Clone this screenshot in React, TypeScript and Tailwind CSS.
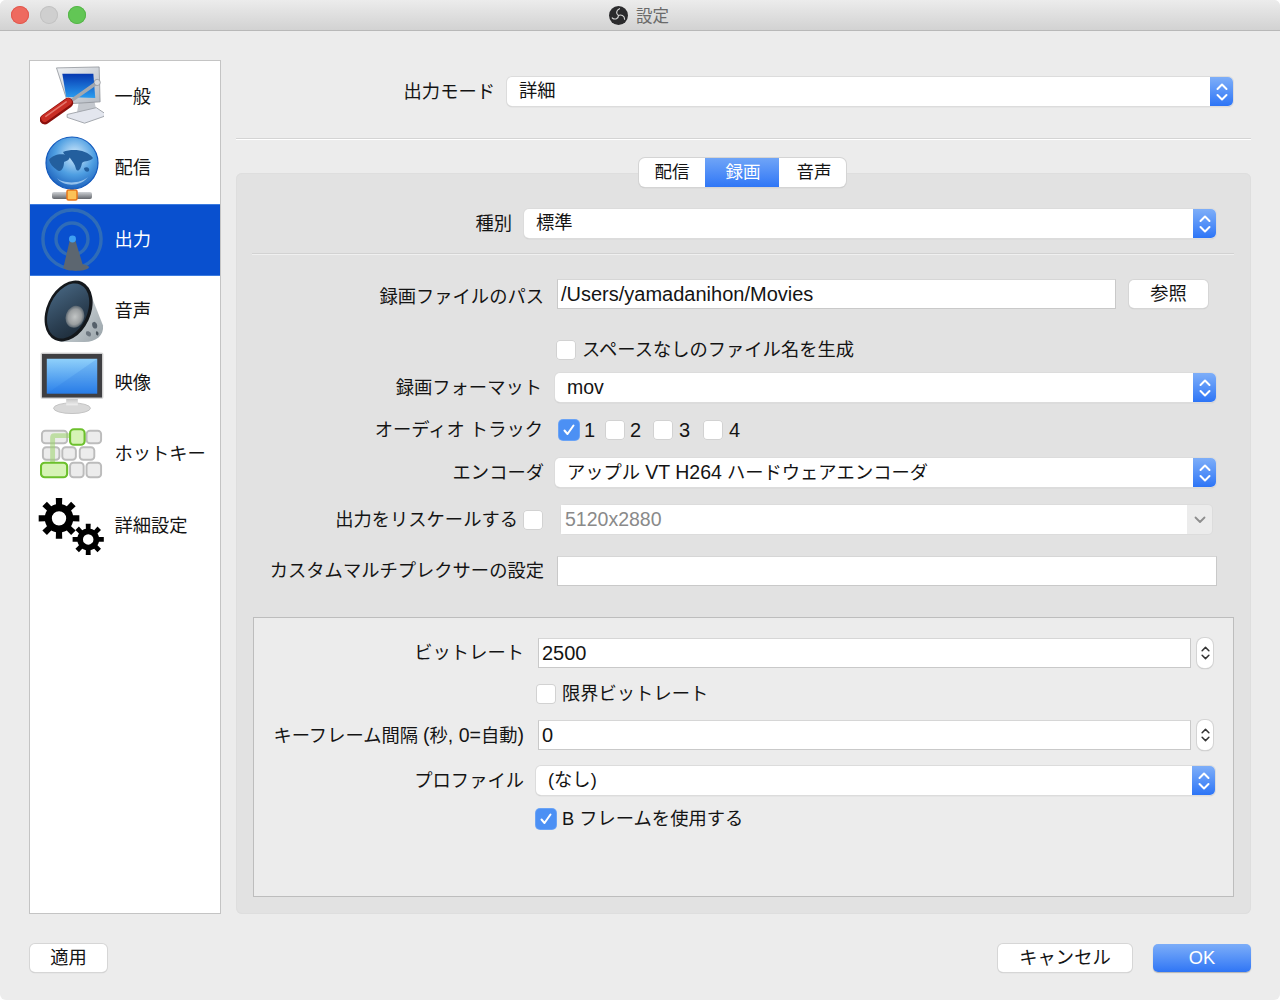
import { ReactNode } from "react";

function gearPath(cx: number, cy: number, outer: number, inner: number, hole: number, teeth: number) {
  let d = "";
  const step = (Math.PI * 2) / teeth;
  for (let i = 0; i < teeth; i++) {
    const a = i * step;
    const pts: [number, number][] = [
      [inner, a - step * 0.5],
      [inner, a - step * 0.27],
      [outer, a - step * 0.2],
      [outer, a + step * 0.2],
      [inner, a + step * 0.27],
    ];
    pts.forEach(([r, t], j) => {
      const x = (cx + r * Math.cos(t)).toFixed(2);
      const y = (cy + r * Math.sin(t)).toFixed(2);
      d += `${i === 0 && j === 0 ? "M" : "L"}${x} ${y} `;
    });
  }
  d += `Z M${cx + hole} ${cy} A${hole} ${hole} 0 1 0 ${cx - hole} ${cy} A${hole} ${hole} 0 1 0 ${cx + hole} ${cy} Z`;
  return d;
}

function GeneralIcon() {
  return (
    <svg width="66" height="62" viewBox="0 0 66 62">
      <defs>
        <linearGradient id="scr" x1="0" y1="0" x2="0" y2="1">
          <stop offset="0" stopColor="#0638b0" />
          <stop offset="1" stopColor="#2a9df0" />
        </linearGradient>
        <linearGradient id="mbz" x1="0" y1="0" x2="1" y2="1">
          <stop offset="0" stopColor="#eef0f3" />
          <stop offset="1" stopColor="#b4bac2" />
        </linearGradient>
      </defs>
      <path d="M40 36 L56 35 L58 44 L38 48 Z" fill="#c4c8ce" />
      <path d="M28 49 L58 42 L67 48 L66 51 L46 58 L28 52 Z" fill="#e3e6ee" stroke="#a2a6ac" strokeWidth="1" />
      <path d="M17 1 L61 0 L62 36 L29 38 Z" fill="url(#mbz)" stroke="#8d9198" strokeWidth="0.8" />
      <path d="M23 7 L55 7 L57 32 L27 31 Z" fill="url(#scr)" />
      <path d="M32 35 L59 16" stroke="#a4a8ae" strokeWidth="3.6" strokeLinecap="round" />
      <circle cx="59" cy="16" r="3.2" fill="#d5d8dc" stroke="#7b7f85" strokeWidth="0.6" />
      <path d="M5 54 L29 37" stroke="#8c0f0c" strokeWidth="10.5" strokeLinecap="round" />
      <path d="M5 53 L29 36" stroke="#c92d24" strokeWidth="7.5" strokeLinecap="round" />
      <path d="M6 51 L27 36" stroke="#ee8f86" strokeWidth="1.6" strokeLinecap="round" opacity="0.75" />
    </svg>
  );
}

function GlobeIcon() {
  return (
    <svg width="58" height="66" viewBox="0 0 58 66">
      <defs>
        <radialGradient id="gl" cx="0.55" cy="0.35" r="0.75">
          <stop offset="0" stopColor="#d6ecfc" />
          <stop offset="0.5" stopColor="#4f9fe2" />
          <stop offset="1" stopColor="#0e4fb0" />
        </radialGradient>
        <linearGradient id="bar" x1="0" y1="0" x2="0" y2="1">
          <stop offset="0" stopColor="#cfd2d6" />
          <stop offset="1" stopColor="#63666b" />
        </linearGradient>
      </defs>
      <rect x="27" y="51" width="4" height="8" fill="#9a9da2" />
      <rect x="9" y="57" width="40" height="7" rx="2" fill="url(#bar)" />
      <rect x="24" y="55" width="10" height="10" rx="1.5" fill="#fbc257" stroke="#e8761a" strokeWidth="1.5" />
      <circle cx="29" cy="28" r="26" fill="url(#gl)" stroke="#1259bd" strokeWidth="1.2" />
      <path d="M6 25 C10 19 20 18 26 21 C28 24 24 26 21 27 C21 33 18 38 14 35 C10 32 7 29 6 25 Z" fill="#235f9e" />
      <path d="M20 17 C30 13 44 15 50 23 C47 27 42 25 39 28 C38 34 35 38 33 34 C32 29 29 26 27 23 C24 21 21 20 20 17 Z" fill="#235f9e" />
      <path d="M41 33 C44 31 47 33 46 36 C44 38 41 36 41 33 Z" fill="#235f9e" />
      <path d="M14 43 C20 49 38 49 45 42 C38 52 20 52 14 43 Z" fill="#bfe0fa" opacity="0.7" />
    </svg>
  );
}

function AntennaIcon() {
  return (
    <svg width="66" height="66" viewBox="0 0 66 66">
      <circle cx="33" cy="32" r="30" fill="none" stroke="#2f6cb8" strokeWidth="3.5" />
      <circle cx="33" cy="32" r="16.5" fill="none" stroke="#2f6cb8" strokeWidth="3.5" />
      <path d="M31 32 L36 32 L44 58 C48 59 52 60 50 62 C46 66 28 66 24 62 Z" fill="#5c6670" />
      <circle cx="33.5" cy="32" r="3.6" fill="#3fa0f2" />
    </svg>
  );
}

function SpeakerIcon() {
  return (
    <svg width="66" height="66" viewBox="0 0 66 66">
      <defs>
        <linearGradient id="cone" x1="0" y1="0" x2="1" y2="1">
          <stop offset="0" stopColor="#4a6a86" />
          <stop offset="0.6" stopColor="#2b3f52" />
          <stop offset="1" stopColor="#1a2733" />
        </linearGradient>
        <linearGradient id="bk" x1="0" y1="0" x2="1" y2="1">
          <stop offset="0" stopColor="#e8eef0" />
          <stop offset="1" stopColor="#98a2a8" />
        </linearGradient>
        <radialGradient id="cap">
          <stop offset="0" stopColor="#c2c5c5" />
          <stop offset="0.7" stopColor="#9a9ea0" />
          <stop offset="1" stopColor="#5a6670" />
        </radialGradient>
      </defs>
      <path d="M50 10 L65 48 C66 58 58 65 46 65 L20 65 Z" fill="url(#bk)" />
      <path d="M56 44 C59 45 60 49 58 51 C55 52 53 48 54 45 Z" fill="#55606a" />
      <path d="M48 54 C51 53 54 56 52 59 C49 60 46 57 48 54 Z" fill="#6d7780" />
      <path d="M58 54 C60 54 61 56 60 58 C58 59 57 56 58 54 Z" fill="#4c565e" />
      <ellipse cx="29.5" cy="33" rx="22.6" ry="33" transform="rotate(25 29.5 33)" fill="#14181c" />
      <ellipse cx="29" cy="33" rx="19.5" ry="30" transform="rotate(25 29 33)" fill="url(#cone)" />
      <ellipse cx="36" cy="39" rx="9.5" ry="11.5" transform="rotate(20 36 39)" fill="url(#cap)" />
    </svg>
  );
}

function MonitorIcon() {
  return (
    <svg width="66" height="64" viewBox="0 0 66 64">
      <defs>
        <linearGradient id="mon" x1="0" y1="0" x2="0" y2="1">
          <stop offset="0" stopColor="#8fd0fa" />
          <stop offset="1" stopColor="#2a80ea" />
        </linearGradient>
        <linearGradient id="stand" x1="0" y1="0" x2="0" y2="1">
          <stop offset="0" stopColor="#b8b8b8" />
          <stop offset="1" stopColor="#efefef" />
        </linearGradient>
      </defs>
      <ellipse cx="33" cy="58" rx="19" ry="5.5" fill="#d8d8d8" stroke="#c2c2c2" />
      <rect x="27" y="46" width="12" height="9" fill="url(#stand)" />
      <rect x="0.5" y="0.5" width="65" height="48" rx="2" fill="#dadada" />
      <rect x="2" y="2" width="62" height="45" fill="#3f3f42" />
      <rect x="7" y="7" width="52" height="36" fill="url(#mon)" />
      <path d="M7 43 L59 7 L59 43 Z" fill="#1f6fe0" opacity="0.18" />
    </svg>
  );
}

function HotkeyIcon() {
  const keys = [
    [2, 3, 26, 13], [48, 3, 15, 13],
    [3, 20, 17, 13], [23, 20, 14, 13], [41, 20, 15, 13],
    [31, 36, 14, 15], [48, 36, 15, 15],
  ];
  return (
    <svg width="66" height="54" viewBox="0 0 66 54">
      {keys.map((k) => (
        <rect key={k.join()} x={k[0]} y={k[1]} width={k[2]} height={k[3]} rx="3.5" fill="#ececec" stroke="#bcbcbc" strokeWidth="2" />
      ))}
      <path d="M13 37 L13 10 Q13 8 15 8 L31 8" fill="none" stroke="#9bd46a" strokeWidth="5" opacity="0.55" />
      <rect x="31" y="1.5" width="15" height="16" rx="4" fill="#d6f3b6" stroke="#6cc02c" strokeWidth="2.2" />
      <rect x="1" y="36" width="27" height="15" rx="4" fill="#d6f3b6" stroke="#6cc02c" strokeWidth="2.2" />
    </svg>
  );
}

function GearsIcon() {
  return (
    <svg width="70" height="64" viewBox="0 0 70 64" className="-ml-[3px]">
      <path fillRule="evenodd" d={gearPath(23, 24, 21.5, 15, 7.5, 8)} fill="#000" />
      <path fillRule="evenodd" d={gearPath(53.5, 46, 16.5, 11.5, 5.5, 8)} fill="#000" />
    </svg>
  );
}

function ObsLogo() {
  return (
    <svg width="19" height="19" viewBox="0 0 20 20">
      <circle cx="10" cy="10" r="10" fill="#2b2b2d" />
      <g fill="none" stroke="#d8d8d8" strokeWidth="1.2" strokeLinecap="round">
        <path d="M10 10 C7.5 8.5 7 4.5 11 2.8" />
        <path d="M10 10 C10 13 6.5 15 3.4 12.6" />
        <path d="M10 10 C12.5 8.8 16.5 10 16.4 14" />
      </g>
    </svg>
  );
}

function Chevrons({ className }: { className: string }) {
  return (
    <svg width="12" height="20" viewBox="0 0 12 20" fill="none" className={className} strokeWidth="2" strokeLinecap="round" strokeLinejoin="round" stroke="currentColor">
      <path d="M1.5 7 L6 2.5 L10.5 7" />
      <path d="M1.5 13 L6 17.5 L10.5 13" />
    </svg>
  );
}

function Latin({ children }: { children: ReactNode }) {
  return <span className="text-[19.5px]">{children}</span>;
}

function Select({ value, className }: { value: ReactNode; className: string }) {
  return (
    <div className={`flex h-[29px] rounded-[5px] bg-white shadow-[0_0_0_1px_#dcdcdc,0_1px_1px_#aeaeae] overflow-hidden ${className}`}>
      <div className="flex-1 pl-[12px] leading-[28px]">{value}</div>
      <div className="flex w-[23px] items-center justify-center bg-gradient-to-b from-[#7eaef8] to-[#2c74f6]">
        <Chevrons className="text-white" />
      </div>
    </div>
  );
}

function Input({ value, className }: { value?: string; className: string }) {
  return (
    <div className={`h-[30px] bg-white border border-[#c9c9c9] border-t-[#d6d6d6] pl-[3px] text-[20px] leading-[28px] ${className}`}>{value}</div>
  );
}

function Spinner() {
  return (
    <div className="ml-[6px] flex h-[30px] w-[16px] items-center justify-center rounded-[7px] bg-white shadow-[0_0_0_1px_#d4d4d4,0_1px_1px_#aeaeae]">
      <Chevrons className="w-[9px] text-[#333]" />
    </div>
  );
}

function Check({ on = false }: { on?: boolean }) {
  return (
    <div
      className={`flex h-[20px] w-[20px] shrink-0 items-center justify-center rounded-[4px] ${
        on ? "bg-[#4c90f4] shadow-[0_0_0_1px_#6aa3f5]" : "bg-white shadow-[inset_0_0_0_1px_#d2d2d2]"
      }`}
    >
      {on && (
        <svg width="14" height="14" viewBox="0 0 14 14" fill="none" stroke="white" strokeWidth="2" strokeLinecap="round" strokeLinejoin="round">
          <path d="M2.5 7.5 L5.5 11 L11.5 2.5" />
        </svg>
      )}
    </div>
  );
}

function Button({ children, className }: { children: ReactNode; className: string }) {
  return (
    <div className={`flex h-[28px] items-center justify-center rounded-[5px] bg-white shadow-[0_0_0_1px_#d6d6d6,0_1px_1px_#b4b4b4] ${className}`}>
      {children}
    </div>
  );
}

function Label({ children, className }: { children: ReactNode; className: string }) {
  return <div className={`shrink-0 text-right ${className}`}>{children}</div>;
}

function NavItem({ icon, label, active = false }: { icon: ReactNode; label: string; active?: boolean }) {
  return (
    <div
      className={`flex h-[71.5px] items-center gap-[10.5px] pl-[10px] ${
        active ? "bg-[#0950cf] text-white shadow-[inset_0_1px_0_#3b7be0,inset_0_-1px_0_#3b7be0]" : ""
      }`}
    >
      <div className="flex w-[64px] shrink-0 items-center justify-center">{icon}</div>
      <span>{label}</span>
    </div>
  );
}

const nav = [
  { label: "一般", icon: <GeneralIcon /> },
  { label: "配信", icon: <GlobeIcon /> },
  { label: "出力", icon: <AntennaIcon />, active: true },
  { label: "音声", icon: <SpeakerIcon /> },
  { label: "映像", icon: <MonitorIcon /> },
  { label: "ホットキー", icon: <HotkeyIcon /> },
  { label: "詳細設定", icon: <GearsIcon /> },
];

export default function App() {
  return (
    <div className="h-[1000px] w-[1280px] overflow-hidden rounded-[6px] bg-[#ececec] font-['Liberation_Sans','Noto_Sans_CJK_JP',sans-serif] text-[18.3px] leading-[20px] text-[#141414]">
      <div className="flex h-[31px] items-center justify-center gap-[8px] border-b border-[#b8b8b8] bg-gradient-to-b from-[#ececec] to-[#d2d2d2]">
        <div className="mr-auto flex gap-[10.5px] pl-[11px]">
          <div className="h-[18px] w-[18px] rounded-full bg-[#ee6a5f] shadow-[inset_0_0_0_1px_#e0584e]" />
          <div className="h-[18px] w-[18px] rounded-full bg-[#cfcfcf] shadow-[inset_0_0_0_1px_#c2c2c2]" />
          <div className="h-[18px] w-[18px] rounded-full bg-[#62c655] shadow-[inset_0_0_0_1px_#55b548]" />
        </div>
        <ObsLogo />
        <span className="pt-[1px] text-[16.5px] text-[#6a6a6a]">設定</span>
        <div className="ml-auto w-[88px]" />
      </div>

      <div className="flex pl-[29px] pt-[29px]">
        <div className="h-[854px] w-[192px] border border-[#c4c4c4] bg-white">
          {nav.map((n) => (
            <NavItem key={n.label} icon={n.icon} label={n.label} active={n.active} />
          ))}
        </div>

        <div className="ml-[15px] flex w-[1015px] flex-col">
          <div className="mt-[17px] flex items-center">
            <Label className="w-[259px]">出力モード</Label>
            <Select value="詳細" className="ml-[12px] w-[726px]" />
          </div>
          <div className="mt-[32px] h-[2px] border-t border-[#d4d4d4] bg-white" />

          <div className="relative z-10 mt-[18px] -mb-[14px] flex justify-center pr-[2px] text-[17.5px]">
            <div className="flex h-[29px] overflow-hidden rounded-[6px] bg-white shadow-[0_0_0_1px_#d4d4d4,0_1px_1px_#b0b0b0]">
              <div className="w-[66px] text-center leading-[28px]">配信</div>
              <div className="w-[74px] bg-gradient-to-b from-[#6fa4f7] to-[#2f76f6] pl-[2px] text-center leading-[28px] text-white">録画</div>
              <div className="w-[67px] pl-[3px] text-center leading-[28px]">音声</div>
            </div>
          </div>

          <div className="flex h-[741px] flex-col rounded-[6px] bg-[#e2e2e2] pl-[16px] pt-[36px] shadow-[inset_0_0_0_1px_#dedede]">
            <div className="flex items-center">
              <Label className="w-[260px]">種別</Label>
              <Select value="標準" className="ml-[12px] w-[692px]" />
            </div>
            <div className="mt-[15px] h-[2px] w-[982px] border-t border-[#d2d2d2] bg-[#f0f0f0]" />

            <div className="mt-[24px] flex items-center">
              <Label className="w-[292px] pt-[5px]">録画ファイルのパス</Label>
              <Input value="/Users/yamadanihon/Movies" className="ml-[13px] w-[559px]" />
              <Button className="ml-[13px] w-[79px]">参照</Button>
            </div>

            <div className="mt-[31px] flex items-center pl-[304px]">
              <Check />
              <span className="ml-[6px]">スペースなしのファイル名を生成</span>
            </div>

            <div className="mt-[13px] flex items-center">
              <Label className="w-[290px]">録画フォーマット</Label>
              <Select value={<Latin>mov</Latin>} className="ml-[13px] w-[661px]" />
            </div>

            <div className="mt-[18px] flex items-center text-[20px]">
              <Label className="w-[291px] text-[18.3px]">オーディオ トラック</Label>
              <div className="ml-[16px]"><Check on /></div>
              <span className="ml-[5px] w-[15px]">1</span>
              <div className="ml-[6px]"><Check /></div>
              <span className="ml-[5px] w-[13px]">2</span>
              <div className="ml-[10px]"><Check /></div>
              <span className="ml-[6px] w-[12px]">3</span>
              <div className="ml-[12px]"><Check /></div>
              <span className="ml-[6px]">4</span>
            </div>

            <div className="mt-[18px] flex items-center">
              <Label className="w-[292px]">エンコーダ</Label>
              <Select
                value={<>アップル <Latin>VT H264</Latin> ハードウェアエンコーダ</>}
                className="ml-[11px] w-[661px]"
              />
            </div>

            <div className="mt-[18px] flex h-[29px] items-center">
              <Label className="w-[266px]">出力をリスケールする</Label>
              <div className="ml-[5px]"><Check /></div>
              <div className="ml-[18px] flex h-[29px] w-[651px] rounded-[4px] bg-[#ececec] shadow-[0_0_0_1px_#dcdcdc]">
                <div className="flex-1 bg-white pl-[4px] text-[19.5px] leading-[28px] text-[#8a8a8a]">5120x2880</div>
                <div className="flex w-[25px] items-center justify-center">
                  <svg width="12" height="8" viewBox="0 0 12 8" fill="none" stroke="#8e8e8e" strokeWidth="1.8" strokeLinecap="round" strokeLinejoin="round">
                    <path d="M1.5 1.5 L6 6 L10.5 1.5" />
                  </svg>
                </div>
              </div>
            </div>

            <div className="mt-[22px] flex items-center">
              <Label className="w-[292px]">カスタムマルチプレクサーの設定</Label>
              <Input className="ml-[13px] w-[660px]" />
            </div>

            <div className="ml-[1px] mt-[31px] flex h-[280px] w-[981px] flex-col border border-[#bdbdbd] bg-[#ececec] pt-[20px]">
              <div className="flex items-center">
                <Label className="w-[270px]">ビットレート</Label>
                <Input value="2500" className="ml-[14px] w-[653px]" />
                <Spinner />
              </div>
              <div className="mt-[16px] flex items-center pl-[282px]">
                <Check />
                <span className="ml-[6px]">限界ビットレート</span>
              </div>
              <div className="mt-[16px] flex items-center">
                <Label className="w-[270px]">
                  キーフレーム間隔 <Latin>(</Latin>秒<Latin>, 0=</Latin>自動<Latin>)</Latin>
                </Label>
                <Input value="0" className="ml-[14px] w-[653px]" />
                <Spinner />
              </div>
              <div className="mt-[16px] flex items-center">
                <Label className="w-[270px]">プロファイル</Label>
                <Select value="(なし)" className="ml-[12px] w-[679px]" />
              </div>
              <div className="mt-[14px] flex items-center pl-[282px]">
                <Check on />
                <span className="ml-[6px]">B フレームを使用する</span>
              </div>
            </div>
          </div>
        </div>
      </div>

      <div className="mt-[30px] flex pl-[30px] pr-[29px]">
        <Button className="w-[77px]">適用</Button>
        <Button className="ml-auto w-[134px]">キャンセル</Button>
        <div className="ml-[21px] flex h-[28px] w-[98px] items-center justify-center rounded-[5px] bg-gradient-to-b from-[#7cadf8] to-[#2f75f5] text-white shadow-[0_1px_1px_#b4b4b4]">OK</div>
      </div>
    </div>
  );
}
